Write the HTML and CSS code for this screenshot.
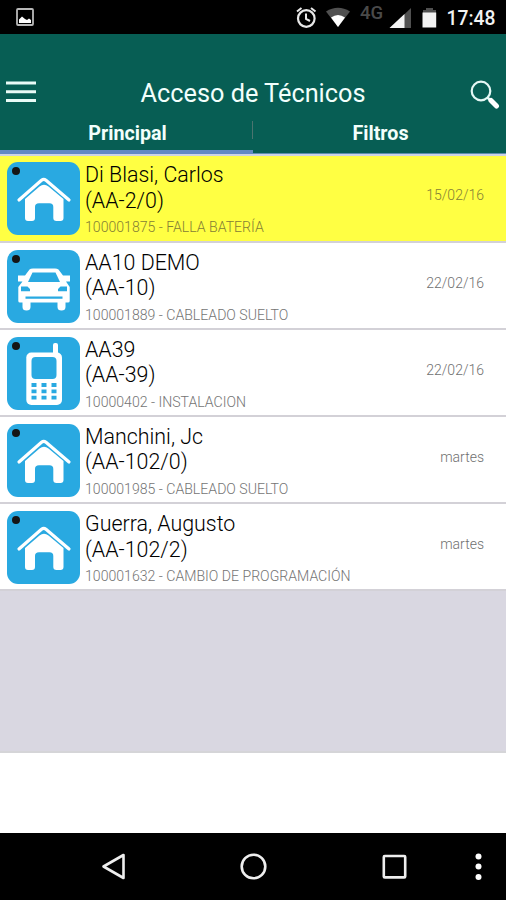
FILE: index.html
```html
<!DOCTYPE html>
<html lang="es">
<head>
    <meta charset="UTF-8">
    <meta name="viewport" content="width=device-width, initial-scale=1.0">
    <title>Acceso de Técnicos</title>
    <link rel="stylesheet" href="styles.css">
</head>
<body>
    <!-- Iconos de la lista -->
    <svg class="sprite" width="0" height="0">
        <symbol id="casa" viewBox="0 0 73 73">
            <path d="M12 38L34.5 18.2Q36.7 16.5 39 18.2L62 38" fill="none" stroke="#fff" stroke-width="3.2" stroke-linecap="round"/>
            <path d="M18 37L32.5 24.500Q37 21 41.5 24.500L56.5 37V56Q56.5 59 53.5 59H49.5Q46.3 59 46.3 56V45Q46.3 41.3 42.5 41.3H32Q28 41.3 28 45V56Q28 59 25 59H21Q18 59 18 56Z" fill="#fff"/>
        </symbol>
        <symbol id="auto" viewBox="0 0 73 73">
            <path d="M11 25.500H18L22.500 19.5Q23.500 18.5 26 18.5H48Q50 18.5 51.500 19.5L56 25.500H63V31.500H59L62.700 37V51Q62.700 52.500 61 52.500H58.500V57Q58.500 60.500 54.500 60.500Q50.500 60.500 50.500 57V52.500H23.500V57Q23.500 60.500 19.500 60.500Q15.500 60.500 15.500 57V52.500H13Q11.300 52.500 11.300 51V37L15.500 31.500H11Z" fill="#fff"/>
            <path d="M25.500 22.500H48.500L53 32H21Z" fill="#29a9e1"/>
            <path d="M14 36.500H20.500L23 39V41.200H14ZM60 36.500H53.500L51 39V41.200H60ZM18.500 46.500H55.500V48.700H18.500Z" fill="#29a9e1"/>
        </symbol>
        <symbol id="telefono" viewBox="0 0 73 73">
            <rect x="19.300" y="15.500" width="35.700" height="52.500" rx="5" fill="#fff"/>
            <rect x="46" y="6" width="5" height="14" rx="2" fill="#fff"/>
            <rect x="24.500" y="20" width="25" height="22" rx="4" fill="#29a9e1"/>
            <path d="M24.500 48h5M34.500 48h5M44.500 48h5M24.500 54.300h5M34.500 54.300h5M44.500 54.300h5M24.500 60.600h5M34.500 60.600h5M44.500 60.600h5" stroke="#29a9e1" stroke-width="3.800"/>
        </symbol>
    </svg>

    <div class="status-bar">
        <svg class="status-photo" width="18" height="18" viewBox="0 0 18 18">
            <rect x="1" y="1" width="16" height="16" rx="1" fill="none" stroke="#b8b8b8" stroke-width="1.800"/>
            <path d="M3 15V11.500L6 8.500L9 11L11 12L13 10.500L15 12V15Z" fill="#fff"/>
        </svg>
        <svg width="200" height="34" viewBox="296 0 200 34" class="status-icons">
            <!-- alarma -->
            <circle cx="306.300" cy="18.500" r="8.300" fill="none" stroke="#e8e8e8" stroke-width="2.200"/>
            <path d="M306 13.500V18.800L310 21M297 11.500L301.500 8M315.500 11.500L311 8" fill="none" stroke="#e8e8e8" stroke-width="2"/>
            <!-- wifi -->
            <path d="M326 11.500Q338 4 350 11.500L338 27Z" fill="#505050"/>
            <path d="M331 17.500Q338 12.500 345 17.500L338 27Z" fill="#fff"/>
            <!-- red -->
            <text x="360" y="18.800" class="red">4G</text>
            <path d="M411 8V28H390Z" fill="#505050"/>
            <path d="M404.500 14V28H389.500Z" fill="#f2f2f2"/>
            <!-- bateria -->
            <path d="M426 8H433V10H436V13H423V10H426Z" fill="#505050"/>
            <path d="M422.500 12.500H436.200V27.500H422.500Z" fill="#f2f2f2"/>
            <text x="446.500" y="25" class="hora">17:48</text>
        </svg>
    </div>

    <header class="header">
        <div class="title-row">
            <svg width="30" height="22" viewBox="0 0 30 22">
                <path d="M0 2H30M0 10.700H30M0 19.400H30" stroke="#e9fbf7" stroke-width="3"/>
            </svg>
            <h1 class="title">Acceso de Técnicos</h1>
            <svg class="search" width="30" height="30" viewBox="0 0 30 30">
                <circle cx="11" cy="11" r="9.300" fill="none" stroke="#e4f8f5" stroke-width="2.200"/>
                <path d="M17.500 17.500L21 21" stroke="#e4f8f5" stroke-width="2.500"/>
                <path d="M21 20.500L26.500 26" stroke="#fff" stroke-width="5" stroke-linecap="round"/>
            </svg>
        </div>
        <nav class="tabs">
            <div class="tab active">Principal</div>
            <div class="tab">Filtros</div>
        </nav>
    </header>

    <main class="list">
        <div class="item selected">
            <div class="icon"><svg width="73" height="73"><use href="#casa"/></svg></div>
            <div class="info">
                <div class="name">Di Blasi, Carlos</div>
                <div class="name">(AA-2/0)</div>
                <div class="detail">100001875 - FALLA BATERÍA</div>
            </div>
            <div class="date">15/02/16</div>
        </div>
        <div class="item">
            <div class="icon"><svg width="73" height="73"><use href="#auto"/></svg></div>
            <div class="info">
                <div class="name">AA10 DEMO</div>
                <div class="name">(AA-10)</div>
                <div class="detail">100001889 - CABLEADO SUELTO</div>
            </div>
            <div class="date">22/02/16</div>
        </div>
        <div class="item">
            <div class="icon"><svg width="73" height="73"><use href="#telefono"/></svg></div>
            <div class="info">
                <div class="name">AA39</div>
                <div class="name">(AA-39)</div>
                <div class="detail">10000402 - INSTALACION</div>
            </div>
            <div class="date">22/02/16</div>
        </div>
        <div class="item">
            <div class="icon"><svg width="73" height="73"><use href="#casa"/></svg></div>
            <div class="info">
                <div class="name">Manchini, Jc</div>
                <div class="name">(AA-102/0)</div>
                <div class="detail">100001985 - CABLEADO SUELTO</div>
            </div>
            <div class="date">martes</div>
        </div>
        <div class="item">
            <div class="icon"><svg width="73" height="73"><use href="#casa"/></svg></div>
            <div class="info">
                <div class="name">Guerra, Augusto</div>
                <div class="name">(AA-102/2)</div>
                <div class="detail">100001632 - CAMBIO DE PROGRAMACIÓN</div>
            </div>
            <div class="date">martes</div>
        </div>
    </main>

    <div class="footer-space"></div>

    <!-- Barra de navegacion -->
    <div class="nav-bar">
        <svg width="506" height="67" viewBox="0 0 506 67">
            <g fill="none" stroke="#eee" stroke-width="2.600">
                <path d="M123.500 22V45L103.500 33.500Z" stroke-linejoin="round"/>
                <circle cx="253.500" cy="33.500" r="11.800"/>
                <rect x="383.800" y="23" width="21.400" height="21.400" rx="1"/>
            </g>
            <g fill="#fff">
                <circle cx="478.500" cy="23.500" r="3"/>
                <circle cx="478.500" cy="33.500" r="3"/>
                <circle cx="478.500" cy="44" r="3"/>
            </g>
        </svg>
    </div>
</body>
</html>
```
FILE: styles.css
```css
* {
    box-sizing: border-box;
}
body {
    margin: 0;
    width: 506px;
    height: 900px;
    display: flex;
    flex-direction: column;
    overflow: hidden;
    font-family: Roboto, sans-serif;
    background-color: #fff;
}
svg {
    display: block;
    flex: none;
}
.sprite {
    position: absolute;
}
.status-bar {
    height: 34px;
    background-color: #000;
    display: flex;
    justify-content: space-between;
    align-items: center;
    padding: 0 10px 0 16px;
}
.red {
    font-size: 18.500px;
    font-weight: 500;
    fill: #4a4a4a;
}
.hora {
    font-size: 19.300px;
    font-weight: 500;
    fill: #f2f2f2;
}
.header {
    height: 121.500px;
    background-color: #075e54;
    color: #f2fffc;
    border-bottom: 2px solid #cdd3e4;
    display: flex;
    flex-direction: column;
}
.title-row {
    height: 85px;
    padding: 31px 6px 0 6px;
    display: flex;
    align-items: center;
    justify-content: space-between;
}
.title {
    margin: 0;
    padding-top: 3px;
    font-size: 25.300px;
    font-weight: 400;
    line-height: 30px;
}
.search {
    margin-top: 5px;
}
.tabs {
    flex: 1;
    display: flex;
}
.tab {
    flex: 0 0 50%;
    text-align: center;
    font-size: 19.700px;
    font-weight: 700;
    line-height: 28px;
    padding: 1px 0 0 2px;
    border-bottom: 1px solid #5f8fae;
}
.tab.active {
    border-bottom: 4px solid #6389c2;
    background: linear-gradient(#4b746f, #4b746f) right 2px / 1px 18px no-repeat;
}
.list {
    height: 597px;
    background-color: #d9d7e1;
    border-bottom: 2px solid #d5d5d8;
}
.item {
    height: 87.200px;
    padding: 6.900px 22px 0 7px;
    display: flex;
    background-color: #fff;
    border-bottom: 2px solid #d3d1d7;
}
.item.selected {
    background-color: #ffff43;
}
.icon {
    position: relative;
    width: 73px;
    height: 73px;
    border-radius: 11px;
    background-color: #29a9e1;
}
.icon::before {
    content: "";
    position: absolute;
    left: 5px;
    top: 5px;
    width: 8px;
    height: 8px;
    border-radius: 50%;
    background-color: #151515;
}
.info {
    flex: 1;
    padding-left: 5px;
    white-space: nowrap;
}
.name {
    font-size: 21.400px;
    font-weight: 300;
    line-height: 25.500px;
    color: #000;
}
.detail {
    font-size: 14.100px;
    font-weight: 300;
    line-height: 17px;
    padding-top: 6px;
    color: #747474;
}
.date {
    font-size: 14px;
    font-weight: 300;
    line-height: 67px;
    color: #707070;
}
.selected .detail,
.selected .date {
    color: #848035;
}
.footer-space {
    flex: 1;
}
.nav-bar {
    height: 67px;
    background-color: #000;
}
```
